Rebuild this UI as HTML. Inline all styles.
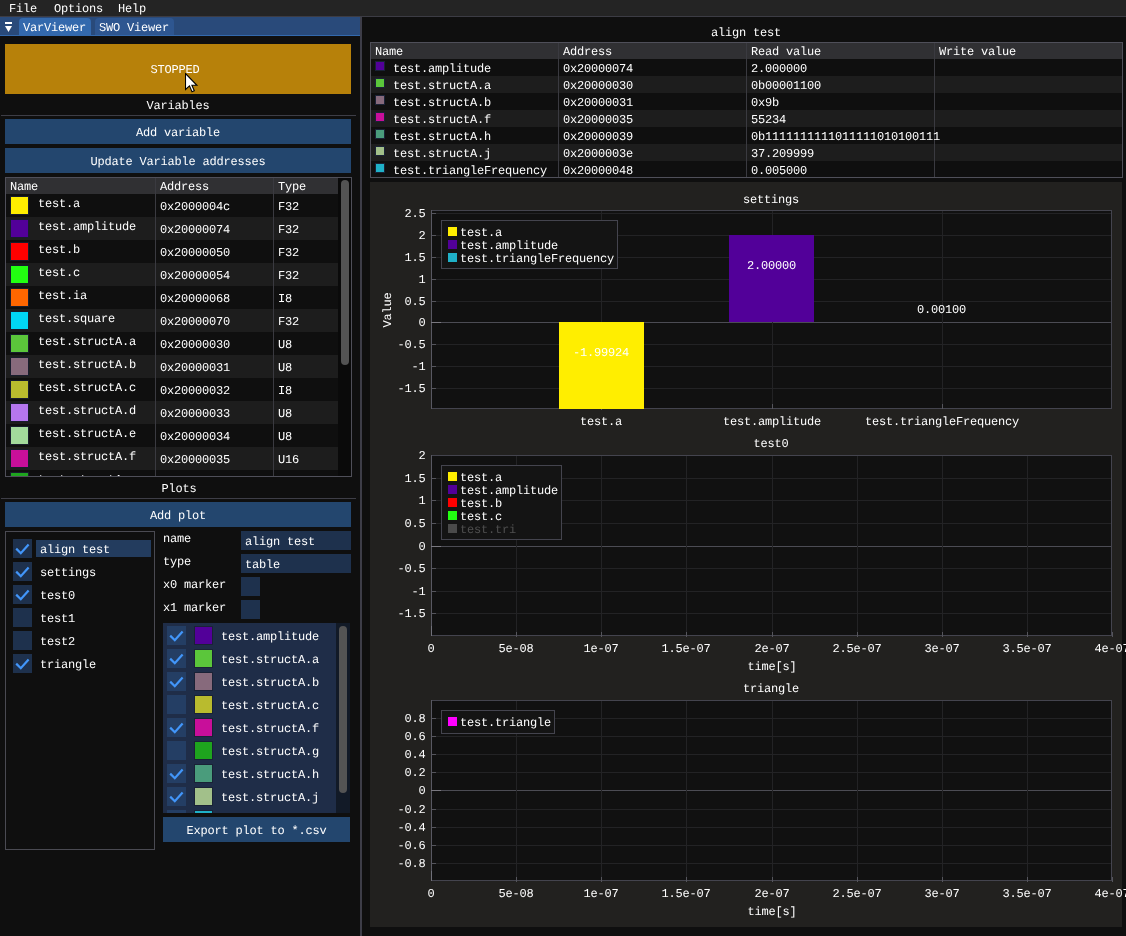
<!DOCTYPE html>
<html><head><meta charset="utf-8"><style>
html,body{margin:0;padding:0;width:1126px;height:936px;overflow:hidden;background:#0f0f0f}
body{position:relative;font-family:"Liberation Mono",monospace;font-size:12.00px;color:#fff;letter-spacing:-0.2px;text-rendering:geometricPrecision}
div,span,svg{position:absolute;box-sizing:content-box}
.t{white-space:pre;line-height:14px;height:14px}
.tl{left:0;top:0;width:1126px;height:936px;will-change:transform}
</style></head><body>
<div style="left:0px;top:0px;width:1126px;height:16px;background:#242424;"></div>
<div style="left:0px;top:16px;width:1126px;height:1px;background:#3c3c44;"></div>
<div style="left:0px;top:17px;width:360px;height:919px;background:#0f0f0f;"></div>
<div style="left:0px;top:17px;width:360px;height:18px;background:#294a7a;"></div>
<div style="left:0px;top:35px;width:360px;height:1px;background:#3369ad;"></div>
<div style="left:5px;top:22px;width:7px;height:2px;background:#fff;"></div>
<svg style="left:4px;top:25px" width="10" height="8"><polygon points="1,1 8,1 4.5,7" fill="#fff"/></svg>
<div style="left:19px;top:18px;width:72px;height:17px;background:#3369ad;border-radius:4px 4px 0 0"></div>
<div style="left:95px;top:18px;width:79px;height:17px;background:#2e5690;border-radius:4px 4px 0 0"></div>
<div style="left:360px;top:17px;width:2px;height:919px;background:#3d3d48;"></div>
<div style="left:5px;top:44px;width:346px;height:50px;background:#b7810a;"></div>
<div style="left:1px;top:115px;width:355px;height:1px;background:#3e3e47;"></div>
<div style="left:5px;top:119px;width:346px;height:25px;background:#23466e;"></div>
<div style="left:5px;top:148px;width:346px;height:25px;background:#23466e;"></div>
<div style="left:5px;top:177px;width:345px;height:298px;border:1px solid #4f4f59;"></div>
<div style="left:6px;top:178px;width:332px;height:16px;background:#303033;"></div>
<div style="left:6px;top:194px;width:332px;height:282px;overflow:hidden">
<div style="left:4px;top:2px;width:19px;height:19px;background:#ffee00;box-shadow:inset 0 0 0 1px #171c2c"></div>
<div style="left:0px;top:23px;width:332px;height:23px;background:#1d1d1d;"></div>
<div style="left:4px;top:25px;width:19px;height:19px;background:#520099;box-shadow:inset 0 0 0 1px #171c2c"></div>
<div style="left:4px;top:48px;width:19px;height:19px;background:#ff0000;box-shadow:inset 0 0 0 1px #171c2c"></div>
<div style="left:0px;top:69px;width:332px;height:23px;background:#1d1d1d;"></div>
<div style="left:4px;top:71px;width:19px;height:19px;background:#22ff11;box-shadow:inset 0 0 0 1px #171c2c"></div>
<div style="left:4px;top:94px;width:19px;height:19px;background:#ff6600;box-shadow:inset 0 0 0 1px #171c2c"></div>
<div style="left:0px;top:115px;width:332px;height:23px;background:#1d1d1d;"></div>
<div style="left:4px;top:117px;width:19px;height:19px;background:#00d5f5;box-shadow:inset 0 0 0 1px #171c2c"></div>
<div style="left:4px;top:140px;width:19px;height:19px;background:#5bc63b;box-shadow:inset 0 0 0 1px #171c2c"></div>
<div style="left:0px;top:161px;width:332px;height:23px;background:#1d1d1d;"></div>
<div style="left:4px;top:163px;width:19px;height:19px;background:#876a7c;box-shadow:inset 0 0 0 1px #171c2c"></div>
<div style="left:4px;top:186px;width:19px;height:19px;background:#b9bb2e;box-shadow:inset 0 0 0 1px #171c2c"></div>
<div style="left:0px;top:207px;width:332px;height:23px;background:#1d1d1d;"></div>
<div style="left:4px;top:209px;width:19px;height:19px;background:#b576ee;box-shadow:inset 0 0 0 1px #171c2c"></div>
<div style="left:4px;top:232px;width:19px;height:19px;background:#a2da9c;box-shadow:inset 0 0 0 1px #171c2c"></div>
<div style="left:0px;top:253px;width:332px;height:23px;background:#1d1d1d;"></div>
<div style="left:4px;top:255px;width:19px;height:19px;background:#c80f9a;box-shadow:inset 0 0 0 1px #171c2c"></div>
<div style="left:4px;top:278px;width:19px;height:19px;background:#1ea41e;box-shadow:inset 0 0 0 1px #171c2c"></div>
</div>
<div style="left:155px;top:178px;width:1px;height:298px;background:#3a3a40;"></div>
<div style="left:273px;top:178px;width:1px;height:298px;background:#3a3a40;"></div>
<div style="left:338px;top:178px;width:13px;height:298px;background:#0a0a0a;"></div>
<div style="left:341px;top:180px;width:8px;height:185px;background:#535353;border-radius:4px"></div>
<div style="left:1px;top:498px;width:355px;height:1px;background:#3e3e47;"></div>
<div style="left:5px;top:502px;width:346px;height:25px;background:#23466e;"></div>
<div style="left:5px;top:531px;width:148px;height:317px;border:1px solid #4a4a52;"></div>
<div style="left:13px;top:539px;width:19px;height:19px;background:#1e314d;"></div>
<svg style="left:13px;top:539px" width="19" height="19"><polyline points="3.2,9.6 7.8,14.2 15.6,5.6" fill="none" stroke="#4296fa" stroke-width="2.2"/></svg>
<div style="left:36px;top:540px;width:115px;height:17px;background:#233c5e;"></div>
<div style="left:13px;top:562px;width:19px;height:19px;background:#1e314d;"></div>
<svg style="left:13px;top:562px" width="19" height="19"><polyline points="3.2,9.6 7.8,14.2 15.6,5.6" fill="none" stroke="#4296fa" stroke-width="2.2"/></svg>
<div style="left:13px;top:585px;width:19px;height:19px;background:#1e314d;"></div>
<svg style="left:13px;top:585px" width="19" height="19"><polyline points="3.2,9.6 7.8,14.2 15.6,5.6" fill="none" stroke="#4296fa" stroke-width="2.2"/></svg>
<div style="left:13px;top:608px;width:19px;height:19px;background:#1e314d;"></div>
<div style="left:13px;top:631px;width:19px;height:19px;background:#1e314d;"></div>
<div style="left:13px;top:654px;width:19px;height:19px;background:#1e314d;"></div>
<svg style="left:13px;top:654px" width="19" height="19"><polyline points="3.2,9.6 7.8,14.2 15.6,5.6" fill="none" stroke="#4296fa" stroke-width="2.2"/></svg>
<div style="left:241px;top:531px;width:110px;height:19px;background:#1e314d;"></div>
<div style="left:241px;top:554px;width:110px;height:19px;background:#1e314d;"></div>
<div style="left:241px;top:577px;width:19px;height:19px;background:#1e314d;"></div>
<div style="left:241px;top:600px;width:19px;height:19px;background:#1e314d;"></div>
<div style="left:163px;top:623px;width:187px;height:190px;background:#1f2d48;"></div>
<div style="left:336px;top:623px;width:14px;height:190px;background:#121a27;"></div>
<div style="left:339px;top:626px;width:8px;height:167px;background:#545454;border-radius:4px"></div>
<div style="left:163px;top:623px;width:173px;height:190px;overflow:hidden">
<div style="left:4px;top:3px;width:19px;height:19px;background:#243e64;"></div>
<svg style="left:4px;top:3px" width="19" height="19"><polyline points="3.2,9.6 7.8,14.2 15.6,5.6" fill="none" stroke="#4296fa" stroke-width="2.2"/></svg>
<div style="left:31px;top:3px;width:19px;height:19px;background:#520099;box-shadow:inset 0 0 0 1px #1a2236"></div>
<div style="left:4px;top:26px;width:19px;height:19px;background:#243e64;"></div>
<svg style="left:4px;top:26px" width="19" height="19"><polyline points="3.2,9.6 7.8,14.2 15.6,5.6" fill="none" stroke="#4296fa" stroke-width="2.2"/></svg>
<div style="left:31px;top:26px;width:19px;height:19px;background:#5bc63b;box-shadow:inset 0 0 0 1px #1a2236"></div>
<div style="left:4px;top:49px;width:19px;height:19px;background:#243e64;"></div>
<svg style="left:4px;top:49px" width="19" height="19"><polyline points="3.2,9.6 7.8,14.2 15.6,5.6" fill="none" stroke="#4296fa" stroke-width="2.2"/></svg>
<div style="left:31px;top:49px;width:19px;height:19px;background:#876a7c;box-shadow:inset 0 0 0 1px #1a2236"></div>
<div style="left:4px;top:72px;width:19px;height:19px;background:#243e64;"></div>
<div style="left:31px;top:72px;width:19px;height:19px;background:#b9bb2e;box-shadow:inset 0 0 0 1px #1a2236"></div>
<div style="left:4px;top:95px;width:19px;height:19px;background:#243e64;"></div>
<svg style="left:4px;top:95px" width="19" height="19"><polyline points="3.2,9.6 7.8,14.2 15.6,5.6" fill="none" stroke="#4296fa" stroke-width="2.2"/></svg>
<div style="left:31px;top:95px;width:19px;height:19px;background:#c80f9a;box-shadow:inset 0 0 0 1px #1a2236"></div>
<div style="left:4px;top:118px;width:19px;height:19px;background:#243e64;"></div>
<div style="left:31px;top:118px;width:19px;height:19px;background:#1ea41e;box-shadow:inset 0 0 0 1px #1a2236"></div>
<div style="left:4px;top:141px;width:19px;height:19px;background:#243e64;"></div>
<svg style="left:4px;top:141px" width="19" height="19"><polyline points="3.2,9.6 7.8,14.2 15.6,5.6" fill="none" stroke="#4296fa" stroke-width="2.2"/></svg>
<div style="left:31px;top:141px;width:19px;height:19px;background:#4a9c7c;box-shadow:inset 0 0 0 1px #1a2236"></div>
<div style="left:4px;top:164px;width:19px;height:19px;background:#243e64;"></div>
<svg style="left:4px;top:164px" width="19" height="19"><polyline points="3.2,9.6 7.8,14.2 15.6,5.6" fill="none" stroke="#4296fa" stroke-width="2.2"/></svg>
<div style="left:31px;top:164px;width:19px;height:19px;background:#a2c08a;box-shadow:inset 0 0 0 1px #1a2236"></div>
<div style="left:4px;top:187px;width:19px;height:19px;background:#243e64;"></div>
<div style="left:31px;top:187px;width:19px;height:19px;background:#1fb1c8;box-shadow:inset 0 0 0 1px #1a2236"></div>
</div>
<div style="left:163px;top:817px;width:187px;height:25px;background:#23466e;"></div>
<div style="left:362px;top:17px;width:764px;height:919px;background:#0f0f0f;"></div>
<div style="left:370px;top:42px;width:751px;height:134px;border:1px solid #4f4f59;"></div>
<div style="left:371px;top:43px;width:751px;height:16px;background:#303033;"></div>
<div style="left:375px;top:61px;width:10px;height:10px;background:#520099;box-shadow:inset 0 0 0 1px #1a2236"></div>
<div style="left:371px;top:76px;width:751px;height:17px;background:#1d1d1d;"></div>
<div style="left:375px;top:78px;width:10px;height:10px;background:#5bc63b;box-shadow:inset 0 0 0 1px #1a2236"></div>
<div style="left:375px;top:95px;width:10px;height:10px;background:#876a7c;box-shadow:inset 0 0 0 1px #1a2236"></div>
<div style="left:371px;top:110px;width:751px;height:17px;background:#1d1d1d;"></div>
<div style="left:375px;top:112px;width:10px;height:10px;background:#c80f9a;box-shadow:inset 0 0 0 1px #1a2236"></div>
<div style="left:375px;top:129px;width:10px;height:10px;background:#4a9c7c;box-shadow:inset 0 0 0 1px #1a2236"></div>
<div style="left:371px;top:144px;width:751px;height:17px;background:#1d1d1d;"></div>
<div style="left:375px;top:146px;width:10px;height:10px;background:#a2c08a;box-shadow:inset 0 0 0 1px #1a2236"></div>
<div style="left:375px;top:163px;width:10px;height:10px;background:#1fb1c8;box-shadow:inset 0 0 0 1px #1a2236"></div>
<div style="left:558px;top:43px;width:1px;height:134px;background:#3a3a40;"></div>
<div style="left:746px;top:43px;width:1px;height:134px;background:#3a3a40;"></div>
<div style="left:934px;top:43px;width:1px;height:134px;background:#3a3a40;"></div>
<div style="left:370px;top:182px;width:752px;height:745px;background:#22211f;"></div>
<div style="left:431px;top:210px;width:680px;height:198px;background:#111111;"></div>
<div style="left:431px;top:213px;width:680px;height:1px;background:#232325;"></div>
<div style="left:431px;top:213px;width:5px;height:1px;background:#55555c;"></div>
<div style="left:431px;top:235px;width:680px;height:1px;background:#232325;"></div>
<div style="left:431px;top:235px;width:5px;height:1px;background:#55555c;"></div>
<div style="left:431px;top:257px;width:680px;height:1px;background:#232325;"></div>
<div style="left:431px;top:257px;width:5px;height:1px;background:#55555c;"></div>
<div style="left:431px;top:279px;width:680px;height:1px;background:#232325;"></div>
<div style="left:431px;top:279px;width:5px;height:1px;background:#55555c;"></div>
<div style="left:431px;top:301px;width:680px;height:1px;background:#232325;"></div>
<div style="left:431px;top:301px;width:5px;height:1px;background:#55555c;"></div>
<div style="left:431px;top:322px;width:680px;height:1px;background:#4c4c54;"></div>
<div style="left:431px;top:322px;width:10px;height:1px;background:#6a6a70;"></div>
<div style="left:431px;top:344px;width:680px;height:1px;background:#232325;"></div>
<div style="left:431px;top:344px;width:5px;height:1px;background:#55555c;"></div>
<div style="left:431px;top:366px;width:680px;height:1px;background:#232325;"></div>
<div style="left:431px;top:366px;width:5px;height:1px;background:#55555c;"></div>
<div style="left:431px;top:388px;width:680px;height:1px;background:#232325;"></div>
<div style="left:431px;top:388px;width:5px;height:1px;background:#55555c;"></div>
<div style="left:601px;top:210px;width:1px;height:198px;background:#232325;"></div>
<div style="left:772px;top:210px;width:1px;height:198px;background:#232325;"></div>
<div style="left:942px;top:210px;width:1px;height:198px;background:#232325;"></div>
<div style="left:559px;top:322px;width:85px;height:87px;background:#ffee00;"></div>
<div style="left:729px;top:235px;width:85px;height:87px;background:#520099;"></div>
<div style="left:431px;top:210px;width:679px;height:197px;border:1px solid #44444e;"></div>
<div style="left:431px;top:210px;width:1px;height:199px;background:#585862;"></div>
<div style="left:772px;top:404px;width:1px;height:5px;background:#55555c;"></div>
<div style="left:942px;top:404px;width:1px;height:5px;background:#55555c;"></div>
<div style="left:601px;top:409px;width:1px;height:1px;background:#55555c;"></div>
<div style="left:431px;top:322px;width:10px;height:1px;background:#7a7880;"></div>
<div style="left:559px;top:408px;width:85px;height:1px;background:#ffee00;"></div>
<div style="left:441px;top:220px;width:177px;height:49px;background:#141414;box-shadow:inset 0 0 0 1px #44444e"></div>
<div style="left:448px;top:227px;width:9px;height:9px;background:#ffee00;"></div>
<div style="left:448px;top:240px;width:9px;height:9px;background:#520099;"></div>
<div style="left:448px;top:253px;width:9px;height:9px;background:#1fb1c8;"></div>
<div style="left:431px;top:455px;width:680px;height:180px;background:#111111;"></div>
<div style="left:431px;top:455px;width:680px;height:1px;background:#232325;"></div>
<div style="left:431px;top:455px;width:5px;height:1px;background:#55555c;"></div>
<div style="left:431px;top:478px;width:680px;height:1px;background:#232325;"></div>
<div style="left:431px;top:478px;width:5px;height:1px;background:#55555c;"></div>
<div style="left:431px;top:500px;width:680px;height:1px;background:#232325;"></div>
<div style="left:431px;top:500px;width:5px;height:1px;background:#55555c;"></div>
<div style="left:431px;top:523px;width:680px;height:1px;background:#232325;"></div>
<div style="left:431px;top:523px;width:5px;height:1px;background:#55555c;"></div>
<div style="left:431px;top:546px;width:680px;height:1px;background:#4c4c54;"></div>
<div style="left:431px;top:546px;width:10px;height:1px;background:#6a6a70;"></div>
<div style="left:431px;top:568px;width:680px;height:1px;background:#232325;"></div>
<div style="left:431px;top:568px;width:5px;height:1px;background:#55555c;"></div>
<div style="left:431px;top:591px;width:680px;height:1px;background:#232325;"></div>
<div style="left:431px;top:591px;width:5px;height:1px;background:#55555c;"></div>
<div style="left:431px;top:613px;width:680px;height:1px;background:#232325;"></div>
<div style="left:431px;top:613px;width:5px;height:1px;background:#55555c;"></div>
<div style="left:516px;top:455px;width:1px;height:180px;background:#232325;"></div>
<div style="left:601px;top:455px;width:1px;height:180px;background:#232325;"></div>
<div style="left:686px;top:455px;width:1px;height:180px;background:#232325;"></div>
<div style="left:772px;top:455px;width:1px;height:180px;background:#232325;"></div>
<div style="left:857px;top:455px;width:1px;height:180px;background:#232325;"></div>
<div style="left:942px;top:455px;width:1px;height:180px;background:#232325;"></div>
<div style="left:1027px;top:455px;width:1px;height:180px;background:#232325;"></div>
<div style="left:431px;top:455px;width:679px;height:179px;border:1px solid #44444e;"></div>
<div style="left:431px;top:455px;width:1px;height:181px;background:#585862;"></div>
<div style="left:516px;top:632px;width:1px;height:5px;background:#55555c;"></div>
<div style="left:601px;top:632px;width:1px;height:5px;background:#55555c;"></div>
<div style="left:686px;top:632px;width:1px;height:5px;background:#55555c;"></div>
<div style="left:772px;top:632px;width:1px;height:5px;background:#55555c;"></div>
<div style="left:857px;top:632px;width:1px;height:5px;background:#55555c;"></div>
<div style="left:942px;top:632px;width:1px;height:5px;background:#55555c;"></div>
<div style="left:1027px;top:632px;width:1px;height:5px;background:#55555c;"></div>
<div style="left:1112px;top:632px;width:1px;height:5px;background:#55555c;"></div>
<div style="left:431px;top:626px;width:1px;height:10px;background:#70707a;"></div>
<div style="left:431px;top:546px;width:10px;height:1px;background:#7a7880;"></div>
<div style="left:441px;top:465px;width:121px;height:75px;background:#141414;box-shadow:inset 0 0 0 1px #44444e"></div>
<div style="left:448px;top:472px;width:9px;height:9px;background:#ffee00;"></div>
<div style="left:448px;top:485px;width:9px;height:9px;background:#520099;"></div>
<div style="left:448px;top:498px;width:9px;height:9px;background:#ff0000;"></div>
<div style="left:448px;top:511px;width:9px;height:9px;background:#22ff11;"></div>
<div style="left:448px;top:524px;width:9px;height:9px;background:#4a4a4a;"></div>
<div style="left:431px;top:700px;width:680px;height:180px;background:#111111;"></div>
<div style="left:431px;top:718px;width:680px;height:1px;background:#232325;"></div>
<div style="left:431px;top:718px;width:5px;height:1px;background:#55555c;"></div>
<div style="left:431px;top:736px;width:680px;height:1px;background:#232325;"></div>
<div style="left:431px;top:736px;width:5px;height:1px;background:#55555c;"></div>
<div style="left:431px;top:754px;width:680px;height:1px;background:#232325;"></div>
<div style="left:431px;top:754px;width:5px;height:1px;background:#55555c;"></div>
<div style="left:431px;top:772px;width:680px;height:1px;background:#232325;"></div>
<div style="left:431px;top:772px;width:5px;height:1px;background:#55555c;"></div>
<div style="left:431px;top:790px;width:680px;height:1px;background:#4c4c54;"></div>
<div style="left:431px;top:790px;width:10px;height:1px;background:#6a6a70;"></div>
<div style="left:431px;top:809px;width:680px;height:1px;background:#232325;"></div>
<div style="left:431px;top:809px;width:5px;height:1px;background:#55555c;"></div>
<div style="left:431px;top:827px;width:680px;height:1px;background:#232325;"></div>
<div style="left:431px;top:827px;width:5px;height:1px;background:#55555c;"></div>
<div style="left:431px;top:845px;width:680px;height:1px;background:#232325;"></div>
<div style="left:431px;top:845px;width:5px;height:1px;background:#55555c;"></div>
<div style="left:431px;top:863px;width:680px;height:1px;background:#232325;"></div>
<div style="left:431px;top:863px;width:5px;height:1px;background:#55555c;"></div>
<div style="left:516px;top:700px;width:1px;height:180px;background:#232325;"></div>
<div style="left:601px;top:700px;width:1px;height:180px;background:#232325;"></div>
<div style="left:686px;top:700px;width:1px;height:180px;background:#232325;"></div>
<div style="left:772px;top:700px;width:1px;height:180px;background:#232325;"></div>
<div style="left:857px;top:700px;width:1px;height:180px;background:#232325;"></div>
<div style="left:942px;top:700px;width:1px;height:180px;background:#232325;"></div>
<div style="left:1027px;top:700px;width:1px;height:180px;background:#232325;"></div>
<div style="left:431px;top:700px;width:679px;height:179px;border:1px solid #44444e;"></div>
<div style="left:431px;top:700px;width:1px;height:181px;background:#585862;"></div>
<div style="left:516px;top:877px;width:1px;height:5px;background:#55555c;"></div>
<div style="left:601px;top:877px;width:1px;height:5px;background:#55555c;"></div>
<div style="left:686px;top:877px;width:1px;height:5px;background:#55555c;"></div>
<div style="left:772px;top:877px;width:1px;height:5px;background:#55555c;"></div>
<div style="left:857px;top:877px;width:1px;height:5px;background:#55555c;"></div>
<div style="left:942px;top:877px;width:1px;height:5px;background:#55555c;"></div>
<div style="left:1027px;top:877px;width:1px;height:5px;background:#55555c;"></div>
<div style="left:1112px;top:877px;width:1px;height:5px;background:#55555c;"></div>
<div style="left:431px;top:871px;width:1px;height:10px;background:#70707a;"></div>
<div style="left:431px;top:790px;width:10px;height:1px;background:#7a7880;"></div>
<div style="left:441px;top:710px;width:114px;height:24px;background:#141414;box-shadow:inset 0 0 0 1px #44444e"></div>
<div style="left:448px;top:717px;width:9px;height:9px;background:#ff00ff;"></div>
<div class="tl">
<span class="t" style="left:9px;top:2.0px;color:#fff;">File</span>
<span class="t" style="left:54px;top:2.0px;color:#fff;">Options</span>
<span class="t" style="left:118px;top:2.0px;color:#fff;">Help</span>
<span class="t" style="left:23px;top:21.0px;color:#fff;">VarViewer</span>
<span class="t" style="left:99px;top:21.0px;color:#fff;">SWO Viewer</span>
<span class="t" style="left:150.5px;top:63.0px;color:#fff;">STOPPED</span>
<span class="t" style="left:146.5px;top:99.0px;color:#fff;">Variables</span>
<span class="t" style="left:136.0px;top:126.0px;color:#fff;">Add variable</span>
<span class="t" style="left:90.5px;top:155.0px;color:#fff;">Update Variable addresses</span>
<span class="t" style="left:10px;top:180.0px;color:#fff;">Name</span>
<span class="t" style="left:160px;top:180.0px;color:#fff;">Address</span>
<span class="t" style="left:278px;top:180.0px;color:#fff;">Type</span>
<div style="left:6px;top:194px;width:332px;height:282px;overflow:hidden">
<span class="t" style="left:32px;top:3.0px;color:#fff;">test.a</span>
<span class="t" style="left:154px;top:6.0px;color:#fff;">0x2000004c</span>
<span class="t" style="left:272px;top:6.0px;color:#fff;">F32</span>
<span class="t" style="left:32px;top:26.0px;color:#fff;">test.amplitude</span>
<span class="t" style="left:154px;top:29.0px;color:#fff;">0x20000074</span>
<span class="t" style="left:272px;top:29.0px;color:#fff;">F32</span>
<span class="t" style="left:32px;top:49.0px;color:#fff;">test.b</span>
<span class="t" style="left:154px;top:52.0px;color:#fff;">0x20000050</span>
<span class="t" style="left:272px;top:52.0px;color:#fff;">F32</span>
<span class="t" style="left:32px;top:72.0px;color:#fff;">test.c</span>
<span class="t" style="left:154px;top:75.0px;color:#fff;">0x20000054</span>
<span class="t" style="left:272px;top:75.0px;color:#fff;">F32</span>
<span class="t" style="left:32px;top:95.0px;color:#fff;">test.ia</span>
<span class="t" style="left:154px;top:98.0px;color:#fff;">0x20000068</span>
<span class="t" style="left:272px;top:98.0px;color:#fff;">I8</span>
<span class="t" style="left:32px;top:118.0px;color:#fff;">test.square</span>
<span class="t" style="left:154px;top:121.0px;color:#fff;">0x20000070</span>
<span class="t" style="left:272px;top:121.0px;color:#fff;">F32</span>
<span class="t" style="left:32px;top:141.0px;color:#fff;">test.structA.a</span>
<span class="t" style="left:154px;top:144.0px;color:#fff;">0x20000030</span>
<span class="t" style="left:272px;top:144.0px;color:#fff;">U8</span>
<span class="t" style="left:32px;top:164.0px;color:#fff;">test.structA.b</span>
<span class="t" style="left:154px;top:167.0px;color:#fff;">0x20000031</span>
<span class="t" style="left:272px;top:167.0px;color:#fff;">U8</span>
<span class="t" style="left:32px;top:187.0px;color:#fff;">test.structA.c</span>
<span class="t" style="left:154px;top:190.0px;color:#fff;">0x20000032</span>
<span class="t" style="left:272px;top:190.0px;color:#fff;">I8</span>
<span class="t" style="left:32px;top:210.0px;color:#fff;">test.structA.d</span>
<span class="t" style="left:154px;top:213.0px;color:#fff;">0x20000033</span>
<span class="t" style="left:272px;top:213.0px;color:#fff;">U8</span>
<span class="t" style="left:32px;top:233.0px;color:#fff;">test.structA.e</span>
<span class="t" style="left:154px;top:236.0px;color:#fff;">0x20000034</span>
<span class="t" style="left:272px;top:236.0px;color:#fff;">U8</span>
<span class="t" style="left:32px;top:256.0px;color:#fff;">test.structA.f</span>
<span class="t" style="left:154px;top:259.0px;color:#fff;">0x20000035</span>
<span class="t" style="left:272px;top:259.0px;color:#fff;">U16</span>
<span class="t" style="left:32px;top:279.0px;color:#fff;">test.structA.g</span>
<span class="t" style="left:154px;top:282.0px;color:#fff;">0x20000036</span>
<span class="t" style="left:272px;top:282.0px;color:#fff;">U8</span>
</div>
<span class="t" style="left:161.5px;top:482.0px;color:#fff;">Plots</span>
<span class="t" style="left:150.0px;top:509.0px;color:#fff;">Add plot</span>
<span class="t" style="left:40px;top:543.0px;color:#fff;">align test</span>
<span class="t" style="left:40px;top:566.0px;color:#fff;">settings</span>
<span class="t" style="left:40px;top:589.0px;color:#fff;">test0</span>
<span class="t" style="left:40px;top:612.0px;color:#fff;">test1</span>
<span class="t" style="left:40px;top:635.0px;color:#fff;">test2</span>
<span class="t" style="left:40px;top:658.0px;color:#fff;">triangle</span>
<span class="t" style="left:163px;top:532.0px;color:#fff;">name</span>
<span class="t" style="left:245px;top:535.0px;color:#fff;">align test</span>
<span class="t" style="left:163px;top:555.0px;color:#fff;">type</span>
<span class="t" style="left:245px;top:558.0px;color:#fff;">table</span>
<span class="t" style="left:163px;top:578.0px;color:#fff;">x0 marker</span>
<span class="t" style="left:163px;top:601.0px;color:#fff;">x1 marker</span>
<div style="left:163px;top:623px;width:173px;height:190px;overflow:hidden">
<span class="t" style="left:58px;top:7.0px;color:#fff;">test.amplitude</span>
<span class="t" style="left:58px;top:30.0px;color:#fff;">test.structA.a</span>
<span class="t" style="left:58px;top:53.0px;color:#fff;">test.structA.b</span>
<span class="t" style="left:58px;top:76.0px;color:#fff;">test.structA.c</span>
<span class="t" style="left:58px;top:99.0px;color:#fff;">test.structA.f</span>
<span class="t" style="left:58px;top:122.0px;color:#fff;">test.structA.g</span>
<span class="t" style="left:58px;top:145.0px;color:#fff;">test.structA.h</span>
<span class="t" style="left:58px;top:168.0px;color:#fff;">test.structA.j</span>
<span class="t" style="left:58px;top:191.0px;color:#fff;">test.triangleFrequency</span>
</div>
<span class="t" style="left:186.5px;top:824.0px;color:#fff;">Export plot to *.csv</span>
<span class="t" style="left:711.0px;top:26.0px;color:#fff;">align test</span>
<span class="t" style="left:375px;top:45.0px;color:#fff;">Name</span>
<span class="t" style="left:563px;top:45.0px;color:#fff;">Address</span>
<span class="t" style="left:751px;top:45.0px;color:#fff;">Read value</span>
<span class="t" style="left:939px;top:45.0px;color:#fff;">Write value</span>
<span class="t" style="left:393px;top:62.0px;color:#fff;">test.amplitude</span>
<span class="t" style="left:563px;top:62.0px;color:#fff;">0x20000074</span>
<span class="t" style="left:751px;top:62.0px;color:#fff;">2.000000</span>
<span class="t" style="left:393px;top:79.0px;color:#fff;">test.structA.a</span>
<span class="t" style="left:563px;top:79.0px;color:#fff;">0x20000030</span>
<span class="t" style="left:751px;top:79.0px;color:#fff;">0b00001100</span>
<span class="t" style="left:393px;top:96.0px;color:#fff;">test.structA.b</span>
<span class="t" style="left:563px;top:96.0px;color:#fff;">0x20000031</span>
<span class="t" style="left:751px;top:96.0px;color:#fff;">0x9b</span>
<span class="t" style="left:393px;top:113.0px;color:#fff;">test.structA.f</span>
<span class="t" style="left:563px;top:113.0px;color:#fff;">0x20000035</span>
<span class="t" style="left:751px;top:113.0px;color:#fff;">55234</span>
<span class="t" style="left:393px;top:130.0px;color:#fff;">test.structA.h</span>
<span class="t" style="left:563px;top:130.0px;color:#fff;">0x20000039</span>
<span class="t" style="left:751px;top:130.0px;color:#fff;">0b1111111111011111010100111</span>
<span class="t" style="left:393px;top:147.0px;color:#fff;">test.structA.j</span>
<span class="t" style="left:563px;top:147.0px;color:#fff;">0x2000003e</span>
<span class="t" style="left:751px;top:147.0px;color:#fff;">37.209999</span>
<span class="t" style="left:393px;top:164.0px;color:#fff;">test.triangleFrequency</span>
<span class="t" style="left:563px;top:164.0px;color:#fff;">0x20000048</span>
<span class="t" style="left:751px;top:164.0px;color:#fff;">0.005000</span>
<span class="t" style="left:743.0px;top:193.0px;color:#fff;">settings</span>
<span class="t" style="left:404.5px;top:207.0px;color:#fff;">2.5</span>
<span class="t" style="left:418.5px;top:229.0px;color:#fff;">2</span>
<span class="t" style="left:404.5px;top:251.0px;color:#fff;">1.5</span>
<span class="t" style="left:418.5px;top:273.0px;color:#fff;">1</span>
<span class="t" style="left:404.5px;top:295.0px;color:#fff;">0.5</span>
<span class="t" style="left:418.5px;top:316.0px;color:#fff;">0</span>
<span class="t" style="left:397.5px;top:338.0px;color:#fff;">-0.5</span>
<span class="t" style="left:411.5px;top:360.0px;color:#fff;">-1</span>
<span class="t" style="left:397.5px;top:382.0px;color:#fff;">-1.5</span>
<span class="t" style="left:573.0px;top:346.0px;color:#fff;">-1.99924</span>
<span class="t" style="left:747.0px;top:259.0px;color:#fff;">2.00000</span>
<span class="t" style="left:917.0px;top:303.0px;color:#fff;">0.00100</span>
<span class="t" style="left:580.0px;top:415.0px;color:#fff;">test.a</span>
<span class="t" style="left:723.0px;top:415.0px;color:#fff;">test.amplitude</span>
<span class="t" style="left:865.0px;top:415.0px;color:#fff;">test.triangleFrequency</span>
<span class="t" style="left:369.7px;top:303px;width:35px;text-align:center;transform:rotate(-90deg);transform-origin:17.5px 7px">Value</span>
<span class="t" style="left:460px;top:226.0px;color:#fff;">test.a</span>
<span class="t" style="left:460px;top:239.0px;color:#fff;">test.amplitude</span>
<span class="t" style="left:460px;top:252.0px;color:#fff;">test.triangleFrequency</span>
<span class="t" style="left:753.5px;top:437.0px;color:#fff;">test0</span>
<span class="t" style="left:418.5px;top:449.0px;color:#fff;">2</span>
<span class="t" style="left:404.5px;top:472.0px;color:#fff;">1.5</span>
<span class="t" style="left:418.5px;top:494.0px;color:#fff;">1</span>
<span class="t" style="left:404.5px;top:517.0px;color:#fff;">0.5</span>
<span class="t" style="left:418.5px;top:540.0px;color:#fff;">0</span>
<span class="t" style="left:397.5px;top:562.0px;color:#fff;">-0.5</span>
<span class="t" style="left:411.5px;top:585.0px;color:#fff;">-1</span>
<span class="t" style="left:397.5px;top:607.0px;color:#fff;">-1.5</span>
<span class="t" style="left:427.5px;top:642.0px;color:#fff;">0</span>
<span class="t" style="left:498.5px;top:642.0px;color:#fff;">5e-08</span>
<span class="t" style="left:583.5px;top:642.0px;color:#fff;">1e-07</span>
<span class="t" style="left:661.5px;top:642.0px;color:#fff;">1.5e-07</span>
<span class="t" style="left:754.5px;top:642.0px;color:#fff;">2e-07</span>
<span class="t" style="left:832.5px;top:642.0px;color:#fff;">2.5e-07</span>
<span class="t" style="left:924.5px;top:642.0px;color:#fff;">3e-07</span>
<span class="t" style="left:1002.5px;top:642.0px;color:#fff;">3.5e-07</span>
<span class="t" style="left:1094.5px;top:642.0px;color:#fff;">4e-07</span>
<span class="t" style="left:747.5px;top:660.0px;color:#fff;">time[s]</span>
<span class="t" style="left:460px;top:471.0px;color:#fff;">test.a</span>
<span class="t" style="left:460px;top:484.0px;color:#fff;">test.amplitude</span>
<span class="t" style="left:460px;top:497.0px;color:#fff;">test.b</span>
<span class="t" style="left:460px;top:510.0px;color:#fff;">test.c</span>
<span class="t" style="left:460px;top:523.0px;color:#4f4f4f;">test.tri</span>
<span class="t" style="left:743.0px;top:682.0px;color:#fff;">triangle</span>
<span class="t" style="left:404.5px;top:712.0px;color:#fff;">0.8</span>
<span class="t" style="left:404.5px;top:730.0px;color:#fff;">0.6</span>
<span class="t" style="left:404.5px;top:748.0px;color:#fff;">0.4</span>
<span class="t" style="left:404.5px;top:766.0px;color:#fff;">0.2</span>
<span class="t" style="left:418.5px;top:784.0px;color:#fff;">0</span>
<span class="t" style="left:397.5px;top:803.0px;color:#fff;">-0.2</span>
<span class="t" style="left:397.5px;top:821.0px;color:#fff;">-0.4</span>
<span class="t" style="left:397.5px;top:839.0px;color:#fff;">-0.6</span>
<span class="t" style="left:397.5px;top:857.0px;color:#fff;">-0.8</span>
<span class="t" style="left:427.5px;top:887.0px;color:#fff;">0</span>
<span class="t" style="left:498.5px;top:887.0px;color:#fff;">5e-08</span>
<span class="t" style="left:583.5px;top:887.0px;color:#fff;">1e-07</span>
<span class="t" style="left:661.5px;top:887.0px;color:#fff;">1.5e-07</span>
<span class="t" style="left:754.5px;top:887.0px;color:#fff;">2e-07</span>
<span class="t" style="left:832.5px;top:887.0px;color:#fff;">2.5e-07</span>
<span class="t" style="left:924.5px;top:887.0px;color:#fff;">3e-07</span>
<span class="t" style="left:1002.5px;top:887.0px;color:#fff;">3.5e-07</span>
<span class="t" style="left:1094.5px;top:887.0px;color:#fff;">4e-07</span>
<span class="t" style="left:747.5px;top:905.0px;color:#fff;">time[s]</span>
<span class="t" style="left:460px;top:716.0px;color:#fff;">test.triangle</span>
</div>
<svg style="left:185px;top:73px" width="14" height="21"><path d="M0.5,0.5 L0.5,16.5 L4.5,12.9 L7,18.7 L9.3,17.7 L6.9,12.3 L11.9,12.3 Z" fill="#fff" stroke="#000" stroke-width="1.1" stroke-linejoin="miter"/></svg>
</body></html>
